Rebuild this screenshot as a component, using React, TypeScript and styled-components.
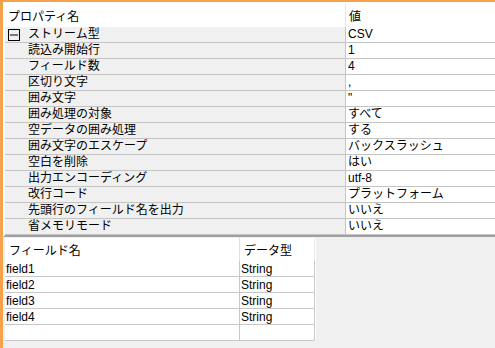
import React from 'react'
import styled, { createGlobalStyle } from 'styled-components'

const GlobalStyle = createGlobalStyle`
    html, body {
        margin: 0;
        padding: 0;
        background: #f0f0f0;
    }
    body {
        font-family: 'Liberation Sans', 'Noto Sans CJK JP', sans-serif;
        font-size: 12px;
        color: #000;
    }
`

interface Property {
    name: string
    value: string
}

const properties: Property[] = [
    { name: '読込み開始行', value: '1' },
    { name: 'フィールド数', value: '4' },
    { name: '区切り文字', value: ',' },
    { name: '囲み文字', value: '"' },
    { name: '囲み処理の対象', value: 'すべて' },
    { name: '空データの囲み処理', value: 'する' },
    { name: '囲み文字のエスケープ', value: 'バックスラッシュ' },
    { name: '空白を削除', value: 'はい' },
    { name: '出力エンコーディング', value: 'utf-8' },
    { name: '改行コード', value: 'プラットフォーム' },
    { name: '先頭行のフィールド名を出力', value: 'いいえ' },
    { name: '省メモリモード', value: 'いいえ' },
]

const fields = ['field1', 'field2', 'field3', 'field4']

const Window = styled.div`
    width: 495px;
    height: 348px;
    box-sizing: border-box;
    overflow: hidden;
    border-top: 2px solid #f5a24c;
    border-left: 3px solid #f5a24c;
    background: #f0f0f0;
    display: flex;
    flex-direction: column;
`

const PropertyGrid = styled.div`
    border-left: 2px solid #fff;
    border-bottom: 2px solid #a0a0a0;
    display: flex;
    flex-direction: column;
`

const Row = styled.div`
    display: grid;
    grid-template-columns: 340px 1fr;
    height: 16px;
    line-height: 15px;
`

const HeaderRow = styled(Row)`
    height: 25px;
    background: #fff;
    padding-top: 5px;
    box-sizing: border-box;
`

const HeaderCell = styled.div<{ divider?: boolean }>`
    padding-left: 3px;
    margin-top: ${(p) => (p.divider ? '-3px' : '0')};
    padding-top: ${(p) => (p.divider ? '3px' : '0')};
    border-left: ${(p) => (p.divider ? '1px solid #e6e6e6' : 'none')};
    line-height: 20px;
    white-space: nowrap;
`

const NameCell = styled.div`
    display: flex;
    align-items: center;
    background: #f0f0f0;
    border-bottom: 1px solid #c4c4c4;
    padding-left: 23px;
    white-space: nowrap;
    position: relative;
`

const ValueCell = styled.div`
    background: #fff;
    border-left: 1px solid #c4c4c4;
    border-bottom: 1px solid #c4c4c4;
    padding-left: 2px;
    white-space: nowrap;
`

const Toggle = styled.svg`
    position: absolute;
    left: 3px;
    top: 2px;
`

const LowerPane = styled.div`
    flex: 1;
    padding: 1px 0 0 2px;
`

const FieldTable = styled.div`
    width: 311px;
    background: #fff;
    display: grid;
    grid-template-columns: 235px 75px;
`

const FieldHeader = styled.div<{ last?: boolean }>`
    height: 23px;
    line-height: 26px;
    padding-left: 4px;
    border-right: 1px solid ${(p) => (p.last ? '#e8e8e8' : '#e0e0e0')};
    white-space: nowrap;
`

const FieldCell = styled.div`
    height: 15px;
    line-height: 16px;
    padding-left: 1px;
    border-right: 1px solid #c8c8c8;
    border-bottom: 1px solid #c8c8c8;
    white-space: nowrap;
`

export default function App() {
    const rows = [...fields.map((f) => [f, 'String']), ['', '']]
    return (
        <>
            <GlobalStyle />
            <Window>
                <PropertyGrid>
                    <HeaderRow>
                        <HeaderCell>プロパティ名</HeaderCell>
                        <HeaderCell divider>値</HeaderCell>
                    </HeaderRow>
                    <Row>
                        <NameCell>
                            <Toggle width="12" height="12" viewBox="0 0 12 12">
                                <rect x="0.5" y="0.5" width="11" height="11" fill="none" stroke="#000" />
                                <line x1="2" y1="6" x2="10" y2="6" stroke="#000" />
                            </Toggle>
                            ストリーム型
                        </NameCell>
                        <ValueCell>CSV</ValueCell>
                    </Row>
                    {properties.map((p) => (
                        <Row key={p.name}>
                            <NameCell>{p.name}</NameCell>
                            <ValueCell>{p.value}</ValueCell>
                        </Row>
                    ))}
                </PropertyGrid>
                <LowerPane>
                    <FieldTable>
                        <FieldHeader>フィールド名</FieldHeader>
                        <FieldHeader last>データ型</FieldHeader>
                        {rows.map((r, i) => (
                            <React.Fragment key={i}>
                                <FieldCell>{r[0]}</FieldCell>
                                <FieldCell>{r[1]}</FieldCell>
                            </React.Fragment>
                        ))}
                    </FieldTable>
                </LowerPane>
            </Window>
        </>
    )
}
